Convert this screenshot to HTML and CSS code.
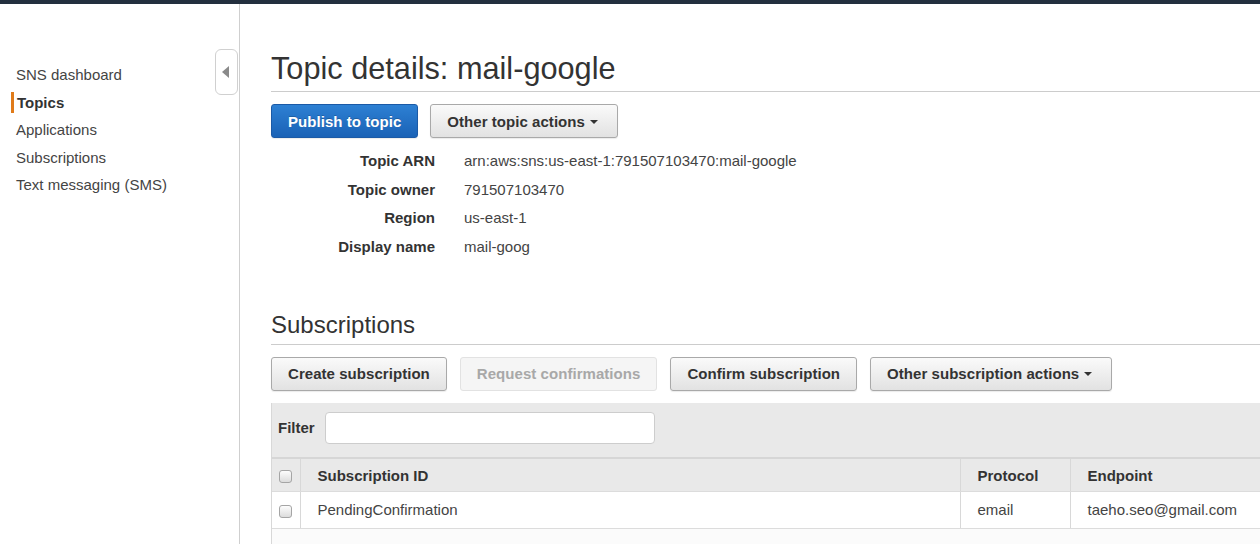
FILE: index.html
```html
<!DOCTYPE html>
<html lang="en">
<head>
<meta charset="utf-8">
<title>SNS – Topic details</title>
<link rel="stylesheet" href="styles.css">
</head>
<body>
<div class="topbar"></div>
<div class="layout">
  <aside class="sidebar">
    <ul class="nav">
      <li><a>SNS dashboard</a></li>
      <li class="active"><a>Topics</a></li>
      <li><a>Applications</a></li>
      <li><a>Subscriptions</a></li>
      <li><a>Text messaging (SMS)</a></li>
    </ul>
    <button class="collapse" aria-label="Collapse"><span class="tri-left"></span></button>
  </aside>

  <main class="content">
    <h1 class="page-title">Topic details: mail-google</h1>
    <div class="btn-row">
      <button class="btn btn-primary">Publish to topic</button>
      <button class="btn btn-dropdown">Other topic actions <span class="caret"></span></button>
    </div>

    <dl class="details">
      <div class="detail"><dt>Topic ARN</dt><dd>arn:aws:sns:us-east-1:791507103470:mail-google</dd></div>
      <div class="detail"><dt>Topic owner</dt><dd>791507103470</dd></div>
      <div class="detail"><dt>Region</dt><dd>us-east-1</dd></div>
      <div class="detail"><dt>Display name</dt><dd>mail-goog</dd></div>
    </dl>

    <h2 class="section-title">Subscriptions</h2>
    <div class="btn-row btn-row-wide">
      <button class="btn">Create subscription</button>
      <button class="btn" disabled>Request confirmations</button>
      <button class="btn">Confirm subscription</button>
      <button class="btn btn-dropdown">Other subscription actions <span class="caret"></span></button>
    </div>

    <div class="grid">
      <div class="filter-bar">
        <label class="filter-label" for="filter">Filter</label>
        <input id="filter" class="filter-input" type="text">
      </div>
      <table class="subs">
        <thead>
          <tr>
            <th class="col-check"><span class="check"></span></th>
            <th class="col-id">Subscription ID</th>
            <th class="col-proto">Protocol</th>
            <th>Endpoint</th>
          </tr>
        </thead>
        <tbody>
          <tr>
            <td class="col-check"><span class="check"></span></td>
            <td class="col-id">PendingConfirmation</td>
            <td class="col-proto">email</td>
            <td>taeho.seo@gmail.com</td>
          </tr>
        </tbody>
      </table>
      <div class="grid-empty"></div>
    </div>
  </main>
</div>
</body>
</html>
```

FILE: styles.css
```css
* { box-sizing: border-box; }

html, body {
  margin: 0;
  padding: 0;
  height: 100%;
  overflow: hidden;
}

body {
  font-family: "Liberation Sans", Arial, sans-serif;
  font-size: 15px;
  color: #444;
  background: #fff;
}

.topbar {
  height: 4px;
  background: #232f3e;
}

.layout {
  display: flex;
  height: calc(100% - 4px);
}

/* ---------- sidebar ---------- */
.sidebar {
  position: relative;
  width: 240px;
  flex: none;
  border-right: 1px solid #cfcfcf;
}

.nav {
  list-style: none;
  margin: 0;
  padding: 57px 0 0 11px;
}

.nav li {
  padding: 3.25px 0;
}

.nav a {
  display: block;
  line-height: 21px;
  padding-left: 2px;
  border-left: 3px solid transparent;
  color: #444;
}

.nav li.active a {
  border-left-color: #e07b1a;
  font-weight: bold;
  color: #333;
  padding-left: 3px;
}

.collapse {
  position: absolute;
  top: 45px;
  right: 1px;
  width: 23px;
  height: 46px;
  padding: 0;
  background: #fff;
  border: 1px solid #d0d0d0;
  border-radius: 6px;
  display: flex;
  align-items: center;
  justify-content: center;
}

.tri-left {
  width: 0;
  height: 0;
  border-top: 6px solid transparent;
  border-bottom: 6px solid transparent;
  border-right: 7px solid #8a8a8a;
  margin-left: -2px;
}

/* ---------- main content ---------- */
.content {
  flex: 1;
  min-width: 0;
  padding: 0 0 0 31px;
  overflow: hidden;
}

.page-title {
  margin: 43px 0 0;
  font-size: 30.7px;
  font-weight: normal;
  color: #333;
  line-height: 43px;
  padding-bottom: 1px;
  border-bottom: 1px solid #ccc;
}

.btn-row {
  display: flex;
  gap: 12px;
  margin-top: 12px;
}

.btn-row-wide {
  gap: 13px;
}

.btn {
  font-family: inherit;
  font-size: 15px;
  font-weight: bold;
  letter-spacing: 0.05px;
  color: #333;
  height: 34px;
  padding: 0 16px;
  border: 1px solid #a9a9a9;
  border-radius: 3px;
  background: linear-gradient(#fafafa, #e2e2e2);
  box-shadow: 0 1px 1px rgba(0, 0, 0, 0.08);
  display: inline-flex;
  align-items: center;
  gap: 4px;
}

.btn-dropdown {
  padding-right: 19px;
  gap: 5px;
}

.btn[disabled] {
  color: #a8a8a8;
  background: #f5f5f5;
  border-color: #e2e2e2;
  box-shadow: none;
}

.btn-primary {
  color: #fff;
  border-color: #1b5aa6;
  background: linear-gradient(#2d80d3, #1a62b6);
  text-shadow: 0 -1px 0 rgba(0, 0, 0, 0.2);
}

.caret {
  width: 0;
  height: 0;
  border-left: 4px solid transparent;
  border-right: 4px solid transparent;
  border-top: 4px solid #333;
  margin-top: 1px;
}

/* ---------- topic details ---------- */
.details {
  margin: 8px 0 0;
}

.detail {
  display: flex;
  height: 28.7px;
  align-items: center;
}

.detail dt {
  width: 164px;
  text-align: right;
  font-weight: bold;
  color: #333;
}

.detail dd {
  margin: 0 0 0 29px;
  color: #444;
}

/* ---------- subscriptions ---------- */
.section-title {
  margin: 49px 0 0;
  font-size: 24px;
  font-weight: normal;
  color: #333;
  line-height: 30px;
  padding-bottom: 4px;
  border-bottom: 1px solid #ccc;
}

.grid {
  margin-top: 12px;
  border-left: 1px solid #d8d8d8;
}

.filter-bar {
  display: flex;
  align-items: center;
  gap: 10px;
  background: #e9e9e9;
  padding: 9px 0 13px 6px;
}

.filter-label {
  font-weight: bold;
  color: #333;
}

.filter-input {
  width: 330px;
  height: 32px;
  border: 1px solid #cdcdcd;
  border-radius: 4px;
  background: #fff;
}

.subs {
  width: 100%;
  border-collapse: collapse;
  border-top: 2px solid #d6d6d6;
}

.subs th,
.subs td {
  text-align: left;
  padding: 0 0 0 17px;
  border-left: 1px solid #d8d8d8;
}

.subs th {
  height: 34px;
  background: #e9e9e9;
  font-weight: bold;
  color: #333;
  border-bottom: 1px solid #dcdcdc;
}

.subs td {
  height: 37px;
  padding-bottom: 2px;
  background: #fff;
  color: #444;
  border-bottom: 1px solid #dcdcdc;
}

.subs .col-check {
  width: 28px;
  padding: 0;
  text-align: center;
  border-left: none;
}

.subs .col-id { width: 660px; }
.subs .col-proto { width: 110px; }

.check {
  display: inline-block;
  width: 13px;
  height: 13px;
  vertical-align: middle;
  border: 1px solid #a5a5a5;
  border-radius: 3px;
  background: linear-gradient(#fdfdfd, #dcdcdc);
}

.grid-empty {
  height: 60px;
  background: #fbfbfb;
}
```
